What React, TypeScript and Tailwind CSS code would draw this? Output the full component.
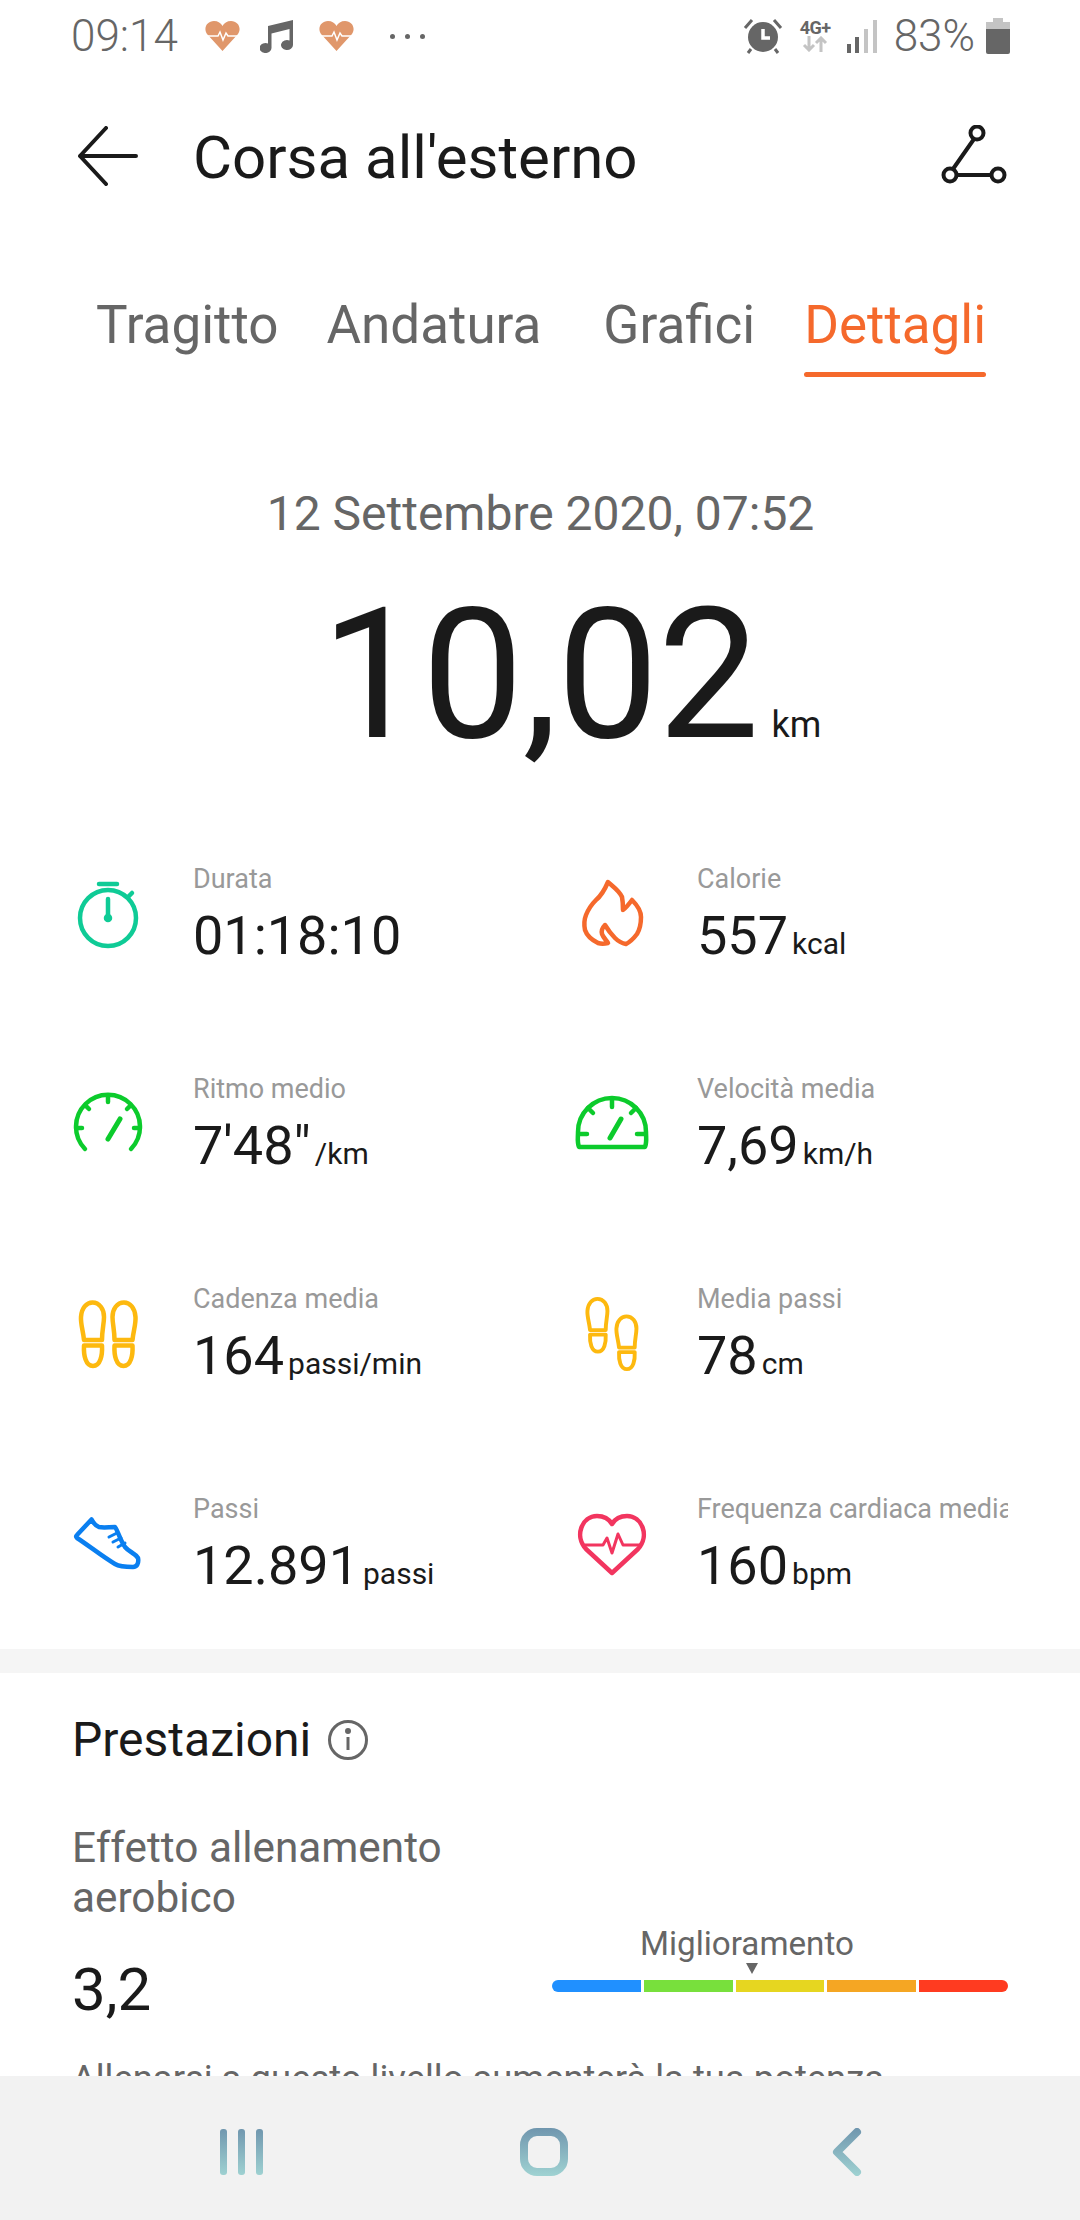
import React from 'react';

const Foot = ({ transform }: { transform: string }) => (
  <g transform={transform}>
    <path d="M3.5 38 C2.5 28 0 22 0.5 15 C1 6 6 0.5 12 0.5 C19 0.5 23.5 7 23.5 15 C23.5 22 21.5 28 21.5 38 Z" />
    <path d="M3.5 43.5 H21.5 C22 53 20 64 12.5 64 C5 64 3 53 3.5 43.5 Z" />
  </g>
);

const Icon = ({ color, children }: { color: string; children: React.ReactNode }) => (
  <svg width="80" height="80" viewBox="0 0 80 80" fill="none" stroke={color} strokeWidth="4.5" strokeLinecap="round" strokeLinejoin="round" className="shrink-0 mt-[16px]">
    {children}
  </svg>
);

const stats = [
  {
    label: 'Durata', value: '01:18:10', unit: '',
    icon: (
      <Icon color="#0fcb96">
        <circle cx="40" cy="41" r="28" />
        <path d="M31 7 H49" />
        <path d="M60 20 L64 16" />
        <path d="M40 22 V40" />
        <circle cx="40" cy="41" r="2" fill="#0fcb96" />
      </Icon>
    ),
  },
  {
    label: 'Calorie', value: '557', unit: 'kcal',
    icon: (
      <Icon color="#f5692c">
        <path d="M36 5 C40 9 47 13 50 20 C51 25 51 29 51 33 C54 31 57 27 60 23 C65 28 69 33 69 40 C69 47 68 52 65 57 C62 61 58 65 54 67 C49 66 46 64 43 61 C39 57 36 53 33 48 C30 51 29 53 30 57 C31 60 34 63 36 66 C32 67 29 67 26 66 C20 63 15 59 13 53 C12 48 12 43 14 38 C16 33 20 27 24 23 C29 19 33 12 36 5 Z" />
      </Icon>
    ),
  },
  {
    label: 'Ritmo medio', value: "7'48\"", unit: '/km',
    icon: (
      <Icon color="#0ccb2c">
        <path d="M17 62 A32 32 0 1 1 63 62" />
        <path d="M40 10 V15 M17.500 18.500 L21 22 M62.500 18.500 L59 22 M8 41 H14 M72 41 H66" />
        <path d="M40 52 L52 32" strokeWidth="5" />
      </Icon>
    ),
  },
  {
    label: 'Velocità media', value: '7,69', unit: 'km/h',
    icon: (
      <Icon color="#0ccb2c">
        <path d="M7 60 C5 55 6 50 6 45 A34 34 0 0 1 74 45 C74 50 75 55 73 60 Z" />
        <path d="M40 12 V20 M16 21 L21 26 M64 21 L59 26 M8 47 H15 M72 47 H65" />
        <path d="M38 51 L49 32" strokeWidth="5" />
      </Icon>
    ),
  },
  {
    label: 'Cadenza media', value: '164', unit: 'passi/min',
    icon: (
      <Icon color="#fdb90f">
        <Foot transform="translate(12.500 5)" />
        <Foot transform="translate(68 5) scale(-1 1)" />
      </Icon>
    ),
  },
  {
    label: 'Media passi', value: '78', unit: 'cm',
    icon: (
      <Icon color="#fdb90f">
        <Foot transform="translate(15 1.500) scale(0.87 0.83)" />
        <Foot transform="translate(44 19) scale(0.87 0.83)" />
      </Icon>
    ),
  },
  {
    label: 'Passi', value: '12.891', unit: 'passi',
    icon: (
      <Icon color="#0a7ff0">
        <path d="M9 28 L23.500 12.500 C25 15 27 19 31 20 C36 21 41 20 47 20 C50 24 52 33 57 40 C61 45 67 46 70 51 C71 56 69 60 65 60 C58 60 52 60 47 57 C35 50 20 38 9 31 C8 30 8 29 9 28 Z" />
        <path d="M41 30 L49 26 M45 35 L53 31 M50 40 L57 36" strokeWidth="3" />
      </Icon>
    ),
  },
  {
    label: 'Frequenza cardiaca media', value: '160', unit: 'bpm',
    icon: (
      <Icon color="#f2355f">
        <path d="M40 66 L14 42 C2 29 10 9 25 9 C32 9 37 12 40 17 C43 12 48 9 55 9 C70 9 78 29 66 42 Z" />
        <path d="M13 38 H31 L35 31 L40 46 L46 27 L51 38 H68" strokeWidth="3" />
      </Icon>
    ),
  },
];

const HeartNotif = () => (
  <svg width="35" height="30" viewBox="0 0 35 30">
    <path d="M17.500 30 L2 13 C-2 7 2 0 9 0 C13 0 16 2 17.500 5 C19 2 22 0 26 0 C33 0 37 7 33 13 Z" fill="#e0976b" />
    <path d="M3 15 H13 L15 11 L18 19 L21 12 L23 15 H32" fill="none" stroke="#fff" strokeWidth="1.500" />
  </svg>
);

const App: React.FC = () => {
  return (
    <div className="w-[1080px] h-[2220px] flex flex-col overflow-hidden bg-white font-['Roboto',sans-serif]">
      <div className="flex-1 min-h-0 overflow-hidden">
        {/* Status bar */}
        <div className="h-[72px] flex items-center pl-[71px] pr-[70px] text-[#666666]">
          <span className="text-[44px] leading-none w-[134px] font-light">09:14</span>
          <HeartNotif />
          <svg width="35" height="33" viewBox="0 0 35 33" className="ml-5" fill="#666666">
            <path d="M8 6 L33 0 V25 A6 5 0 1 1 29.500 20.500 V9 L11.500 13.500 V28 A6 5 0 1 1 8 23.500 Z" />
          </svg>
          <div className="ml-6"><HeartNotif /></div>
          <div className="ml-9 flex gap-[10px]">
            <span className="w-[5px] h-[5px] rounded-full bg-[#666666]"></span>
            <span className="w-[5px] h-[5px] rounded-full bg-[#666666]"></span>
            <span className="w-[5px] h-[5px] rounded-full bg-[#666666]"></span>
          </div>
          <div className="flex-1"></div>
          <svg width="40" height="36" viewBox="0 0 40 36" fill="#666666">
            <circle cx="20" cy="19" r="15" />
            <path d="M20 11 V20 H27" fill="none" stroke="#fff" strokeWidth="3.500" />
            <path d="M2 10 L9 2 M38 10 L31 2 M8 31 L5 35 M32 31 L35 35" stroke="#666666" strokeWidth="3" fill="none" />
          </svg>
          <div className="ml-[15px] w-[35px] flex flex-col items-center">
            <span className="text-[18px] leading-[16px] font-bold tracking-[-0.5px]">4G+</span>
            <svg width="28" height="16" viewBox="0 0 28 16" fill="none" stroke="#c4c4c4" strokeWidth="3">
              <path d="M8 0 V14 M3 9 L8 14 L13 9 M20 16 V2 M15 7 L20 2 L25 7" />
            </svg>
          </div>
          <svg width="30" height="33" viewBox="0 0 30 33" className="ml-[14px]">
            <rect x="0" y="24" width="4" height="9" fill="#666666" />
            <rect x="8" y="17" width="4" height="16" fill="#666666" />
            <rect x="17" y="9" width="4" height="24" fill="#c4c4c4" />
            <rect x="26" y="0" width="4" height="33" fill="#c4c4c4" />
          </svg>
          <span className="ml-[17px] text-[44px] leading-none font-light">83%</span>
          <svg width="24" height="36" viewBox="0 0 24 36" className="ml-[11px]">
            <path d="M7 0 H17 V4 H24 V11 H0 V4 H7 Z" fill="#c4c4c4" />
            <path d="M0 11 H24 V34 Q24 36 22 36 H2 Q0 36 0 34 Z" fill="#666666" />
          </svg>
        </div>

        {/* Header */}
        <div className="h-[172px] flex items-center pl-[78px] pr-[72px]">
          <svg width="60" height="60" viewBox="0 0 60 60" fill="none" stroke="#1a1a1a" strokeWidth="4" strokeLinecap="round" strokeLinejoin="round" className="-mt-1">
            <path d="M28 2 L2 30 L28 58 M2 30 H58" />
          </svg>
          <h1 className="ml-[55px] text-[60px] leading-none text-[#1a1a1a] font-normal">Corsa all'esterno</h1>
          <div className="flex-1"></div>
          <svg width="68" height="62" viewBox="0 0 68 62" fill="none" stroke="#1a1a1a" strokeWidth="4" className="-mt-1">
            <circle cx="37" cy="8" r="6.500" />
            <circle cx="10" cy="50" r="6.500" />
            <circle cx="58" cy="50" r="6.500" />
            <path d="M34 14 L13 44 M17 50 H51" />
          </svg>
        </div>

        {/* Tabs */}
        <div className="h-[136px] pt-[51px] flex items-start pl-[96px] text-[53px] leading-[60px] text-[#666666]">
          <span>Tragitto</span>
          <span className="ml-[48px]">Andatura</span>
          <span className="ml-[62px]">Grafici</span>
          <div className="ml-[49px] flex flex-col">
            <span className="text-[#f5692c]">Dettagli</span>
            <span className="mt-[17px] h-[5px] rounded-full bg-[#f5692c]"></span>
          </div>
        </div>

        {/* Date and distance */}
        <p className="mt-[106px] text-center text-[48px] leading-[56px] text-[#666666] pl-[1px]">12 Settembre 2020, 07:52</p>
        <div className="mt-[48px] flex items-baseline h-[170px] pl-[321px]">
          <span className="text-[181px] leading-[170px] text-[#1a1a1a] tracking-[-1px]">10,02</span>
          <span className="ml-[13px] text-[36px] leading-none text-[#1a1a1a]">km</span>
        </div>

        {/* Stats */}
        <div className="mt-[101px] pl-[68px] grid grid-cols-[504px_436px] grid-rows-[210px_210px_210px_158px]">
          {stats.map((s) => (
            <div key={s.label} className="flex min-w-0">
              {s.icon}
              <div className="ml-[45px] flex-1 min-w-0 overflow-hidden whitespace-nowrap">
                <p className="text-[27px] leading-[36px] text-[#999999]">{s.label}</p>
                <p className="mt-[9px] leading-[60px] text-[#1a1a1a]">
                  <span className="text-[54px]">{s.value}</span>
                  {s.unit && <span className="ml-[4px] text-[30px]">{s.unit}</span>}
                </p>
              </div>
            </div>
          ))}
        </div>

        {/* Performance */}
        <div className="h-[24px] bg-[#f5f5f5]"></div>
        <div className="px-[72px]">
          <div className="mt-[39px] flex items-center">
            <h2 className="text-[48px] leading-[56px] text-[#1a1a1a] font-normal">Prestazioni</h2>
            <svg width="42" height="42" viewBox="0 0 42 42" fill="none" stroke="#666666" strokeWidth="3" className="ml-4">
              <circle cx="21" cy="21" r="18.500" />
              <path d="M21 18 V31" />
              <circle cx="21" cy="12" r="1.500" fill="#666666" />
            </svg>
          </div>
          <div className="mt-[55px] flex justify-between items-start">
            <div>
              <p className="text-[42.3px] leading-[50px] text-[#666666]">Effetto allenamento<br />aerobico</p>
              <p className="mt-[35px] text-[60px] leading-[64px] text-[#1a1a1a]">3,2</p>
            </div>
            <div className="w-[456px] mt-[102px]">
              <p className="ml-[88px] text-[33.2px] leading-[38px] text-[#666666]">Miglioramento</p>
              <div className="ml-[194px] w-0 h-0 border-x-[6px] border-x-transparent border-t-[11px] border-t-[#666666]"></div>
              <div className="mt-[6px] flex gap-[3px] h-[12px] rounded-full overflow-hidden">
                <div className="flex-1 bg-[#2090ff]"></div>
                <div className="flex-1 bg-[#78e03c]"></div>
                <div className="flex-1 bg-[#e6d620]"></div>
                <div className="flex-1 bg-[#f5a623]"></div>
                <div className="flex-1 bg-[#ff3b20]"></div>
              </div>
            </div>
          </div>
          <p className="mt-[35px] text-[36.4px] leading-[44px] text-[#666666] whitespace-nowrap">Allenarsi a questo livello aumenterà la tua potenza</p>
        </div>
      </div>

      {/* Nav bar */}
      <div className="h-[144px] shrink-0 bg-[#f2f2f2] flex items-center pt-[8px]">
        <svg width="1080" height="48" viewBox="0 0 1080 48" fill="none" strokeLinecap="round" strokeLinejoin="round">
          <defs>
            <linearGradient id="nav" x1="0" y1="0" x2="0" y2="48" gradientUnits="userSpaceOnUse">
              <stop offset="0" stopColor="#7096ae" />
              <stop offset="1" stopColor="#9fd2d2" />
            </linearGradient>
          </defs>
          <rect x="220" y="1" width="7" height="46" rx="3" fill="url(#nav)" />
          <rect x="238" y="1" width="7" height="46" rx="3" fill="url(#nav)" />
          <rect x="256" y="1" width="7" height="46" rx="3" fill="url(#nav)" />
          <rect x="524" y="4" width="40" height="40" rx="13" stroke="url(#nav)" strokeWidth="8" />
          <path d="M857 4 L837 24 L857 44" stroke="url(#nav)" strokeWidth="8" />
        </svg>
      </div>
    </div>
  );
};

export default App;
